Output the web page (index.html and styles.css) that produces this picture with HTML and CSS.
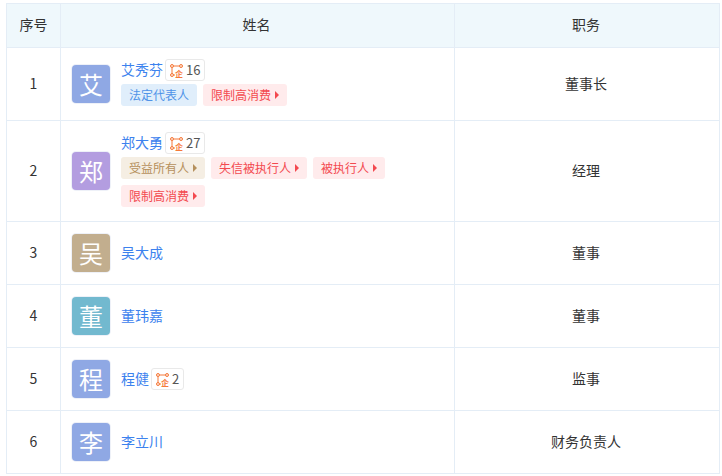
FILE: index.html
```html
<!DOCTYPE html>
<html lang="zh-CN">
<head>
<meta charset="utf-8">
<title>主要人员</title>
<link rel="stylesheet" href="styles.css">
</head>
<body>
<table class="staff">
  <colgroup><col class="c-num"><col class="c-name"><col class="c-job"></colgroup>
  <thead>
    <tr><th>序号</th><th>姓名</th><th>职务</th></tr>
  </thead>
  <tbody>
    <tr>
      <td>1</td>
      <td>
        <div class="person">
          <span class="avatar a-blue">艾</span>
          <div class="info has-tags">
            <div class="line"><a class="name">艾秀芬</a><span class="rel"><svg class="rel-icon" viewBox="0 0 13 13"><g class="rel-net"><circle cx="2" cy="2" r="1.5"/><circle cx="11" cy="2" r="1.5"/><circle cx="2" cy="11" r="1.5"/><path d="M3.5 2h6M2 3.5v6M3.5 11H5"/></g><text class="rel-co" x="9" y="13">企</text></svg>16</span></div>
            <div class="tags">
              <span class="tag t-blue">法定代表人</span>
              <span class="tag t-red more">限制高消费</span>
            </div>
          </div>
        </div>
      </td>
      <td>董事长</td>
    </tr>
    <tr>
      <td>2</td>
      <td>
        <div class="person">
          <span class="avatar a-purple">郑</span>
          <div class="info has-tags">
            <div class="line"><a class="name">郑大勇</a><span class="rel"><svg class="rel-icon" viewBox="0 0 13 13"><g class="rel-net"><circle cx="2" cy="2" r="1.5"/><circle cx="11" cy="2" r="1.5"/><circle cx="2" cy="11" r="1.5"/><path d="M3.5 2h6M2 3.5v6M3.5 11H5"/></g><text class="rel-co" x="9" y="13">企</text></svg>27</span></div>
            <div class="tags">
              <span class="tag t-tan more">受益所有人</span>
              <span class="tag t-red more">失信被执行人</span>
              <span class="tag t-red more">被执行人</span>
              <span class="tag t-red more">限制高消费</span>
            </div>
          </div>
        </div>
      </td>
      <td>经理</td>
    </tr>
    <tr>
      <td>3</td>
      <td><div class="person"><span class="avatar a-tan">吴</span><div class="info"><div class="line"><a class="name">吴大成</a></div></div></div></td>
      <td>董事</td>
    </tr>
    <tr>
      <td>4</td>
      <td><div class="person"><span class="avatar a-teal">董</span><div class="info"><div class="line"><a class="name">董玮嘉</a></div></div></div></td>
      <td>董事</td>
    </tr>
    <tr>
      <td>5</td>
      <td><div class="person"><span class="avatar a-blue">程</span><div class="info"><div class="line"><a class="name">程健</a><span class="rel"><svg class="rel-icon" viewBox="0 0 13 13"><g class="rel-net"><circle cx="2" cy="2" r="1.5"/><circle cx="11" cy="2" r="1.5"/><circle cx="2" cy="11" r="1.5"/><path d="M3.5 2h6M2 3.5v6M3.5 11H5"/></g><text class="rel-co" x="9" y="13">企</text></svg>2</span></div></div></div></td>
      <td>监事</td>
    </tr>
    <tr>
      <td>6</td>
      <td><div class="person"><span class="avatar a-blue">李</span><div class="info"><div class="line"><a class="name">李立川</a></div></div></div></td>
      <td>财务负责人</td>
    </tr>
  </tbody>
</table>
</body>
</html>
```
FILE: styles.css
```css
* { box-sizing: border-box; }
html, body { margin: 0; height: 100%; background: #fff; overflow: hidden; }
body {
  padding: 3px 0 0 6px;
  font-family: "Noto Sans CJK SC", "Noto Sans", sans-serif;
  font-size: 14px;
  color: #333;
}
.staff {
  width: 713px;
  table-layout: fixed;
  border-collapse: collapse;
}
.c-num { width: 54px; }
.c-name { width: 394px; }
.c-job { width: 265px; }
.staff th, .staff td {
  border: 1px solid #e4edf6;
  text-align: center;
  font-weight: 400;
  line-height: 20px;
  padding: 0 0 3px;
}
.staff th:nth-child(n+2), .staff td:nth-child(3) { padding-right: 2px; }
.staff th { height: 44px; background: #eff8fc; }
.staff td:nth-child(2) { text-align: left; padding: 12px 10px 12px 11px; }
.person { display: flex; align-items: center; gap: 11px; }
.avatar {
  flex: none;
  width: 38px;
  height: 38px;
  display: flex;
  align-items: center;
  justify-content: center;
  border-radius: 4px;
  box-shadow: 0 0 0 1px #eef1f8;
  color: #fff;
  font-size: 24px;
  line-height: 1;
}
.a-blue { background: #8fa8e4; }
.a-purple { background: #b39de0; }
.a-tan { background: #c2ae8e; }
.a-teal { background: #72b9cf; }
.info { min-width: 0; flex: 1; }
.has-tags { margin: -1px 0 0; }
.line { display: flex; align-items: center; height: 22px; gap: 2px; }
.name { color: #3c82ee; margin-bottom: 2px; }
.rel {
  display: inline-flex;
  align-items: center;
  height: 22px;
  padding: 0 4px;
  border: 1px solid #e9e9e9;
  border-radius: 3px;
  color: #555;
  font-size: 13px;
}
.rel-icon { width: 13px; height: 13px; margin-right: 3px; overflow: visible; }
.rel-net { fill: #fde3d5; stroke: #f5793a; stroke-width: 1; }
.rel-co { font-size: 8px; fill: #f5793a; text-anchor: middle; font-weight: 700; }
.tags { display: flex; flex-wrap: wrap; gap: 6px; margin: 3px 0 2px; }
.tag {
  display: inline-flex;
  align-items: center;
  height: 22px;
  padding: 0 8px;
  border-radius: 3px;
  font-size: 12px;
  line-height: 22px;
}
.more::after {
  content: "";
  width: 0;
  height: 0;
  margin-left: 4px;
  border-left: 4px solid currentColor;
  border-top: 4px solid transparent;
  border-bottom: 4px solid transparent;
}
.t-blue { background: #e0eefb; color: #4f93e8; }
.t-red { background: #ffebec; color: #f3494f; }
.t-tan { background: #f5eee3; color: #b5905c; }
```
